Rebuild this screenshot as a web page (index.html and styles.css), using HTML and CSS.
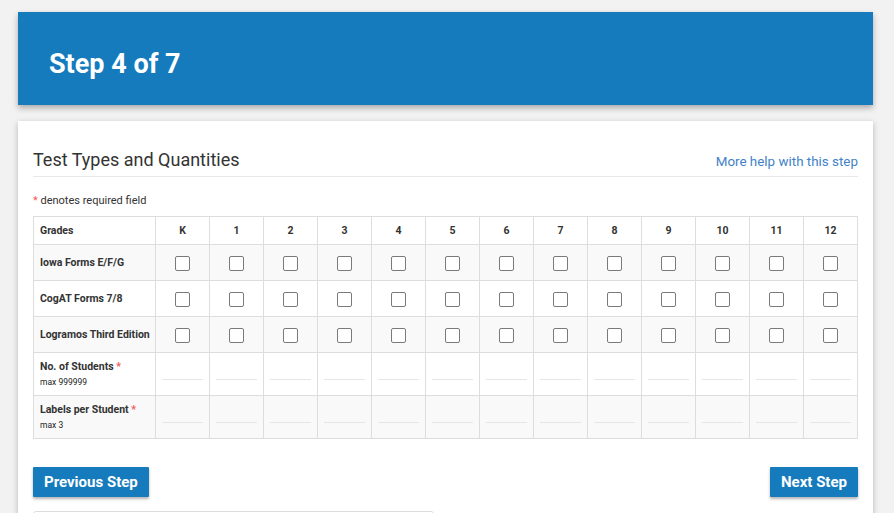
FILE: index.html
```html
<!DOCTYPE html>
<html lang="en">
<head>
<meta charset="utf-8">
<title>Step 4 of 7</title>
<link rel="stylesheet" href="styles.css">
</head>
<body>
<div class="page">
  <header class="step-bar">
    <h1 class="step-title">Step 4 of 7</h1>
  </header>
  <main class="card">
    <div class="card-head">
      <h2 class="card-title">Test Types and Quantities</h2>
      <a class="help-link" href="#">More help with this step</a>
    </div>
    <p class="req-note"><span class="req">*</span> denotes required field</p>
    <table class="grid">
      <thead>
        <tr>
          <th class="label-col">Grades</th>
          <th>K</th><th>1</th><th>2</th><th>3</th><th>4</th><th>5</th><th>6</th><th>7</th><th>8</th><th>9</th><th>10</th><th>11</th><th>12</th>
        </tr>
      </thead>
      <tbody>
        <tr class="check-row">
          <th class="label-col">Iowa Forms E/F/G</th>
          <td><input type="checkbox" class="cb"></td><td><input type="checkbox" class="cb"></td><td><input type="checkbox" class="cb"></td><td><input type="checkbox" class="cb"></td><td><input type="checkbox" class="cb"></td><td><input type="checkbox" class="cb"></td><td><input type="checkbox" class="cb"></td><td><input type="checkbox" class="cb"></td><td><input type="checkbox" class="cb"></td><td><input type="checkbox" class="cb"></td><td><input type="checkbox" class="cb"></td><td><input type="checkbox" class="cb"></td><td><input type="checkbox" class="cb"></td>
        </tr>
        <tr class="check-row">
          <th class="label-col">CogAT Forms 7/8</th>
          <td><input type="checkbox" class="cb"></td><td><input type="checkbox" class="cb"></td><td><input type="checkbox" class="cb"></td><td><input type="checkbox" class="cb"></td><td><input type="checkbox" class="cb"></td><td><input type="checkbox" class="cb"></td><td><input type="checkbox" class="cb"></td><td><input type="checkbox" class="cb"></td><td><input type="checkbox" class="cb"></td><td><input type="checkbox" class="cb"></td><td><input type="checkbox" class="cb"></td><td><input type="checkbox" class="cb"></td><td><input type="checkbox" class="cb"></td>
        </tr>
        <tr class="check-row">
          <th class="label-col">Logramos Third Edition</th>
          <td><input type="checkbox" class="cb"></td><td><input type="checkbox" class="cb"></td><td><input type="checkbox" class="cb"></td><td><input type="checkbox" class="cb"></td><td><input type="checkbox" class="cb"></td><td><input type="checkbox" class="cb"></td><td><input type="checkbox" class="cb"></td><td><input type="checkbox" class="cb"></td><td><input type="checkbox" class="cb"></td><td><input type="checkbox" class="cb"></td><td><input type="checkbox" class="cb"></td><td><input type="checkbox" class="cb"></td><td><input type="checkbox" class="cb"></td>
        </tr>
        <tr class="input-row">
          <th class="label-col">No. of Students <span class="req">*</span><small class="max">max 999999</small></th>
          <td><input type="text" class="num"></td><td><input type="text" class="num"></td><td><input type="text" class="num"></td><td><input type="text" class="num"></td><td><input type="text" class="num"></td><td><input type="text" class="num"></td><td><input type="text" class="num"></td><td><input type="text" class="num"></td><td><input type="text" class="num"></td><td><input type="text" class="num"></td><td><input type="text" class="num"></td><td><input type="text" class="num"></td><td><input type="text" class="num"></td>
        </tr>
        <tr class="input-row">
          <th class="label-col">Labels per Student <span class="req">*</span><small class="max">max 3</small></th>
          <td><input type="text" class="num"></td><td><input type="text" class="num"></td><td><input type="text" class="num"></td><td><input type="text" class="num"></td><td><input type="text" class="num"></td><td><input type="text" class="num"></td><td><input type="text" class="num"></td><td><input type="text" class="num"></td><td><input type="text" class="num"></td><td><input type="text" class="num"></td><td><input type="text" class="num"></td><td><input type="text" class="num"></td><td><input type="text" class="num"></td>
        </tr>
      </tbody>
    </table>
    <div class="actions">
      <button class="btn" type="button">Previous Step</button>
      <button class="btn" type="button">Next Step</button>
    </div>
    <div class="next-box"></div>
  </main>
</div>
</body>
</html>
```
FILE: styles.css
```css
* { box-sizing: border-box; }
html, body { margin: 0; padding: 0; }
body {
  background: #f2f2f2;
  font-family: Roboto, "Liberation Sans", Arial, sans-serif;
  color: #333;
  overflow: hidden;
}
.page {
  padding: 12px 21px 0 18px;
  display: flex;
  flex-direction: column;
  gap: 16px;
}
.step-bar {
  background: #157bbd;
  height: 93px;
  padding: 12px 31px 0;
  display: flex;
  align-items: center;
  box-shadow: 0 3px 6px rgba(0,0,0,0.3);
}
.step-title {
  margin: 0;
  color: #fff;
  font-size: 27px;
  font-weight: 700;
  line-height: 1;
}
.card {
  background: #fff;
  padding: 28px 15px 0;
  box-shadow: 0 2px 6px rgba(0,0,0,0.25);
  height: 420px;
}
.card-head {
  display: flex;
  justify-content: space-between;
  align-items: baseline;
  border-bottom: 1px solid #e8e8e8;
  padding-bottom: 6px;
}
.card-title {
  margin: 0;
  font-size: 18px;
  font-weight: 400;
  line-height: 21px;
  color: #333;
}
.help-link {
  font-size: 13.4px;
  color: #3f82c8;
  text-decoration: none;
}
.req-note {
  margin: 17px 0 8px;
  font-size: 11px;
  line-height: 14px;
  color: #333;
}
.req { color: #ef5a5a; }
.grid {
  width: 100%;
  border-collapse: collapse;
  table-layout: fixed;
  font-size: 10.5px;
}
.grid th, .grid td {
  border: 1px solid #ddd;
  text-align: center;
  vertical-align: middle;
  padding: 0 6px;
}
.grid .label-col {
  width: 122px;
  text-align: left;
  padding: 0 3px 0 6px;
  font-weight: 700;
  color: #333;
  white-space: nowrap;
}
.grid thead tr { height: 28px; }
.grid thead th { font-weight: 700; color: #333; }
.check-row { height: 36px; }
.input-row { height: 43px; }
.grid tbody tr:nth-child(odd) { background: #f9f9f9; }
.grid tbody tr:nth-child(even) { background: #fff; }
.cb {
  appearance: none;
  -webkit-appearance: none;
  width: 15px;
  height: 15px;
  margin: 2px 0 0;
  border: 1px solid #7a7a7a;
  border-radius: 2px;
  background: #fff;
  display: inline-block;
  vertical-align: middle;
}
.input-row th.label-col,
.input-row td {
  vertical-align: top;
}
.input-row th.label-col {
  padding-top: 8px;
  line-height: 12px;
}
.max {
  display: block;
  margin-top: 4px;
  font-size: 8.5px;
  font-weight: 400;
  line-height: 10px;
  color: #222;
}
.input-row td { padding-top: 6px; }
.num {
  display: block;
  width: 100%;
  height: 21px;
  margin: 0;
  border: 0;
  border-bottom: 1px solid #e6e6e6;
  background: transparent;
  padding: 0;
  font: inherit;
}
.actions {
  display: flex;
  justify-content: space-between;
  margin-top: 28px;
}
.btn {
  background: #157bbd;
  color: #fff;
  border: 0;
  height: 30px;
  padding: 0 11px;
  font-family: Roboto, "Liberation Sans", Arial, sans-serif;
  font-size: 15px;
  font-weight: 700;
  border-radius: 1px;
  box-shadow: 0 2px 3px rgba(0,0,0,0.3);
}
.next-box {
  margin-top: 14px;
  width: 401px;
  height: 20px;
  border: 1px solid #ddd;
  border-radius: 3px;
}
```
